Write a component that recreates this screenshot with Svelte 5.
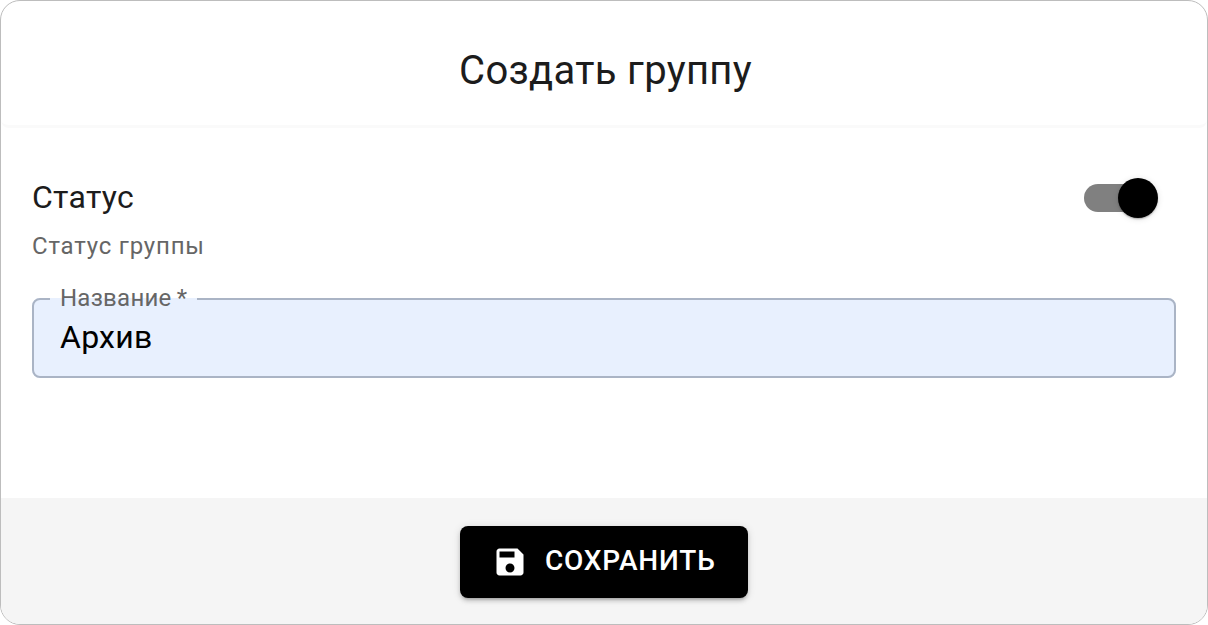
<script>
    let status = true;
    let name = 'Архив';
</script>

<div class="card">
    <header class="head">
        <h1>Создать группу</h1>
    </header>

    <main class="body">
        <div class="status-row">
            <div class="status-title">Статус</div>
            <button class="switch" class:on={status} aria-label="Статус" on:click={() => (status = !status)}>
                <span class="track"></span>
                <span class="thumb"></span>
            </button>
        </div>
        <p class="hint">Статус группы</p>

        <fieldset class="field">
            <legend>Название&thinsp;*</legend>
            <input type="text" bind:value={name} />
        </fieldset>
    </main>

    <footer class="foot">
        <button class="save">
            <svg viewBox="0 0 24 24" width="36" height="36" aria-hidden="true">
                <path fill="currentColor" d="M17 3H5c-1.11 0-2 .9-2 2v14c0 1.1.89 2 2 2h14c1.1 0 2-.9 2-2V7l-4-4zm-5 16c-1.66 0-3-1.34-3-3s1.34-3 3-3 3 1.34 3 3-1.34 3-3 3zm3-10H5V5h10v4z" />
            </svg>
            <span class="save-label">Сохранить</span>
        </button>
    </footer>
</div>

<style>
    :global(body) { margin: 0; background: #fff; }
    .card {
        box-sizing: border-box;
        width: 1208px;
        height: 625px;
        display: flex;
        flex-direction: column;
        border: 1px solid #bdbdbd;
        border-radius: 20px;
        background: #fff;
        font-family: Roboto, "Liberation Sans", sans-serif;
        color: #1c1c1c;
    }
    .head {
        height: 127px;
        flex: none;
        display: flex;
        align-items: center;
        justify-content: center;
        padding: 15px 0 0 3px;
        border-bottom: 3px solid #fafafa;
        box-sizing: border-box;
        border-radius: 0 0 8px 8px;
    }
    h1 { margin: 0; font-size: 40px; font-weight: 400; letter-spacing: 0.3px; }
    .body { flex: 1; padding: 0 31px; }
    .status-row {
        display: flex;
        align-items: center;
        justify-content: space-between;
        padding-top: 45px;
    }
    .status-title { font-size: 32px; line-height: 48px; letter-spacing: 0.25px; }
    .switch {
        position: relative;
        width: 74px;
        height: 40px;
        margin: 2px 18px 0 0;
        padding: 0;
        border: none;
        background: none;
        cursor: pointer;
    }
    .track {
        position: absolute;
        left: 0;
        top: 6px;
        width: 68px;
        height: 28px;
        border-radius: 14px;
        background: #808080;
    }
    .thumb {
        position: absolute;
        left: 0;
        top: 0;
        width: 40px;
        height: 40px;
        border-radius: 50%;
        background: #888;
        box-shadow: 0 2px 2px -1px rgba(0,0,0,0.2), 0 1px 2px rgba(0,0,0,0.14), 0 1px 6px rgba(0,0,0,0.12);
    }
    .switch.on .thumb { left: 34px; background: #000; }
    .hint { margin: 7px 0 0; font-size: 24px; line-height: 36px; color: #666; letter-spacing: 0.8px; }
    .field {
        box-sizing: border-box;
        margin: 21px 0 0;
        padding: 0 26px;
        height: 93px;
        border: 2px solid #aab4c5;
        border-radius: 8px;
        background: #e8f0fe;
    }
    legend {
        padding: 0 10px 2px;
        margin-left: -10px;
        font-size: 24px;
        line-height: 26px;
        color: #666;
        letter-spacing: 0.25px;
    }
    input {
        display: block;
        width: 100%;
        margin-top: 2px;
        border: none;
        outline: none;
        background: transparent;
        padding: 0;
        font: inherit;
        font-size: 32px;
        line-height: 44px;
        letter-spacing: 0.25px;
        color: #000;
    }
    .foot {
        height: 126px;
        flex: none;
        display: flex;
        align-items: center;
        justify-content: center;
        box-sizing: border-box;
        padding-top: 2px;
        background: #f5f5f5;
        border-radius: 0 0 19px 19px;
    }
    .save {
        display: flex;
        align-items: center;
        gap: 17px;
        box-sizing: border-box;
        width: 288px;
        height: 72px;
        padding: 0 0 0 32px;
        border: none;
        border-radius: 8px;
        background: #000;
        color: #fff;
        font: inherit;
        font-size: 28px;
        font-weight: 500;
        letter-spacing: 0.8px;
        text-transform: uppercase;
        cursor: pointer;
        box-shadow: 0 3px 3px -2px rgba(0,0,0,0.2), 0 3px 4px rgba(0,0,0,0.14), 0 1px 8px rgba(0,0,0,0.12);
    }
    .save-label { margin-bottom: 3px; }
</style>
